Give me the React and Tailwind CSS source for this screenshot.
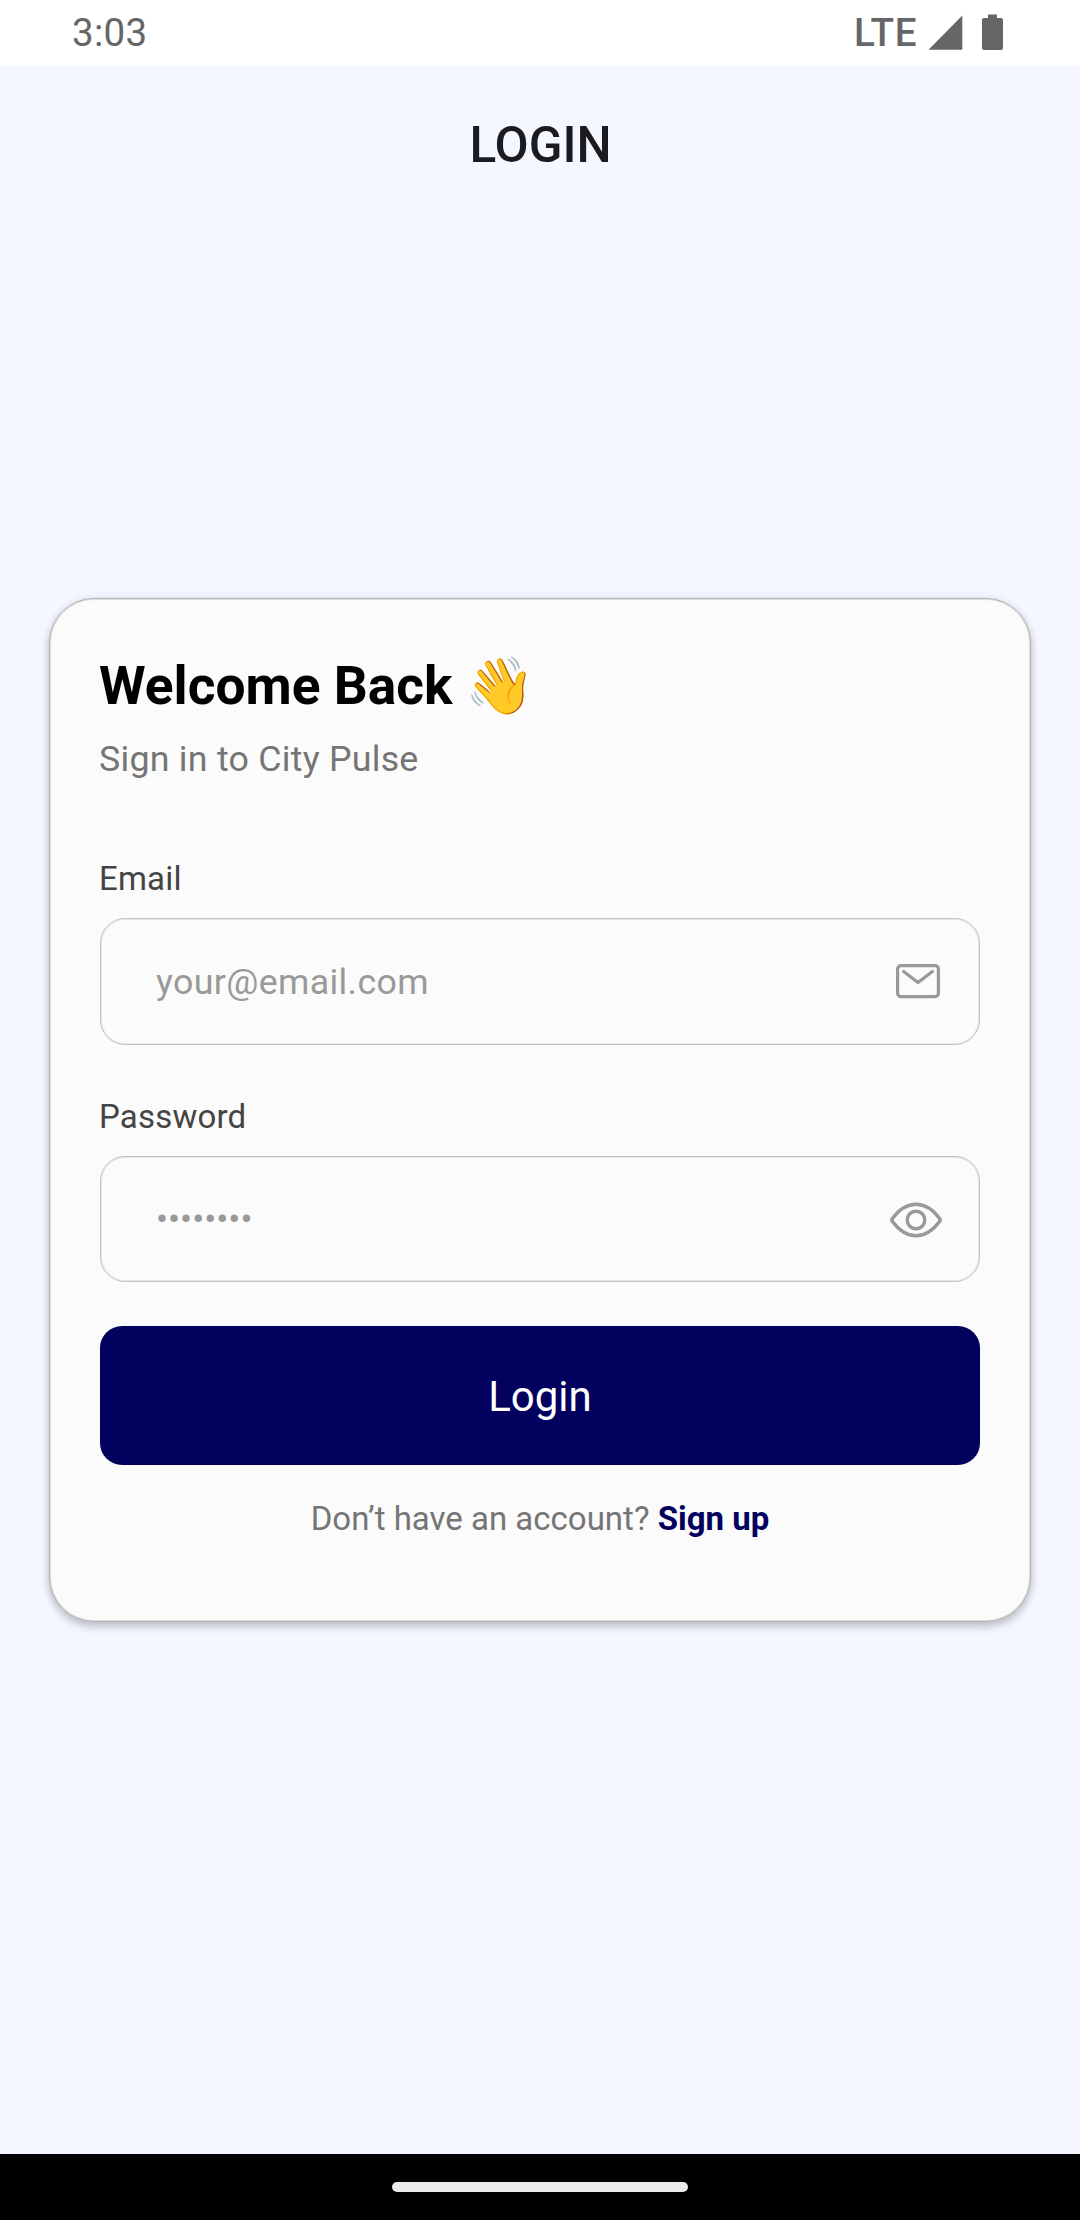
function StatusBar() {
  return (
    <header className="flex h-[66px] items-center justify-between bg-white pl-[72px] pr-[77px] text-[#666666]">
      <span className="text-[38.5px] leading-[64px] tracking-[0.3px]">3:03</span>
      <div className="flex h-[66px] items-start">
        <span className="mr-[11px] text-[38.5px] font-medium leading-[65px] tracking-[0.6px]">LTE</span>
        <svg className="mt-[15px] h-[35px] w-[35px]" viewBox="0 0 35 35" fill="currentColor">
          <path d="M0.5 34.7 34.3 0.5V34.7Z" />
        </svg>
        <svg className="ml-[19px] mt-[14px] h-[36px] w-[21px]" viewBox="0 0 21 36" fill="currentColor">
          <path d="M6 0.5H15V4H19Q21 4 21 6V34Q21 36 19 36H2Q0 36 0 34V6Q0 4 2 4H6Z" />
        </svg>
      </div>
    </header>
  );
}

function MailIcon() {
  return (
    <svg className="h-[36px] w-[46px]" viewBox="0 0 46 36" fill="none" stroke="#999999" strokeWidth="3.2" strokeLinecap="round" strokeLinejoin="round">
      <rect x="2.6" y="2.6" width="40.8" height="31" rx="3.4" />
      <path d="M8.6 8.5 23 19.5 37.4 8.5" />
    </svg>
  );
}

function EyeIcon() {
  return (
    <svg className="h-[38px] w-[54px]" viewBox="0 0 54 38" fill="none" stroke="#999999" strokeWidth="3.4" strokeLinejoin="round">
      <path d="M2.9 19.8Q2.3 19 2.9 18.2C9.5 9 18 3.2 27 3.2S44.5 9 51.1 18.2Q51.7 19 51.1 19.8C44.5 29 36 34.8 27 34.8S9.5 29 2.9 19.8Z" />
      <circle cx="27" cy="19" r="8.8" />
    </svg>
  );
}

function Field({ label, boxClass, children, icon }) {
  return (
    <div>
      <div className="-ml-px text-[33px] leading-[44px] tracking-[0.2px] text-[#444444]">{label}</div>
      <div
        className={`mt-[17px] flex items-center justify-between rounded-[25px] border border-[#c2c2c2] pl-[55px] shadow-[inset_0_0_0_1px_#e6e6e6] ${boxClass}`}
      >
        {children}
        {icon}
      </div>
    </div>
  );
}

export default function App() {
  return (
    <div className="flex h-[2220px] w-[1080px] flex-col overflow-hidden bg-[#f4f7ff] font-['Roboto',sans-serif]">
      <StatusBar />
      <h1 className="pl-px pt-[47px] text-center text-[49.5px] font-medium leading-[64px] text-[#1b1b1f]">LOGIN</h1>
      <main className="mx-[49px] mt-[421px] h-[1024px] rounded-[45px] border border-[#b2b2b5] bg-[#fbfbfb] px-[50px] pt-[49px] shadow-[inset_0_0_0_1px_#e0e0e0,0_5px_9px_rgba(0,0,0,0.2),0_0_8px_rgba(0,0,0,0.08)]">
        <h2 className="-ml-px flex h-[76px] items-center whitespace-pre text-[53.3px] font-bold leading-[76px] text-black">
          <span>Welcome Back </span>
          <span className="-ml-px text-[56px]">👋</span>
        </h2>
        <p className="-ml-px mt-[9px] text-[35.75px] leading-[52px] tracking-[0.25px] text-[#757575]">Sign in to City Pulse</p>
        <div className="mt-[72px]">
          <Field label="Email" boxClass="h-[127px]" icon={<span className="mr-[38px] pb-[2px]"><MailIcon /></span>}>
            <span className="text-[35.75px] leading-[48px] tracking-[0.35px] text-[#999999]">your@email.com</span>
          </Field>
        </div>
        <div className="mt-[50px]">
          <Field label="Password" boxClass="h-[126px]" icon={<span className="mr-[36px] pt-[2px]"><EyeIcon /></span>}>
            <span className="text-[35.75px] leading-[48px] text-[#999999]">••••••••</span>
          </Field>
        </div>
        <button className="mt-[44px] flex h-[139px] w-full items-center justify-center rounded-[22px] bg-[#02025e] pt-[2px] text-[42px] leading-[56px] text-white">
          Login
        </button>
        <p className="mt-[30px] text-center text-[33px] leading-[48px] text-[#757575]">
          Don’t have an account? <span className="font-bold text-[#02025e]">Sign up</span>
        </p>
      </main>
      <footer className="mt-auto flex h-[66px] items-center justify-center bg-black">
        <div className="h-[10px] w-[296px] rounded-full bg-[#ebebeb]" />
      </footer>
    </div>
  );
}
